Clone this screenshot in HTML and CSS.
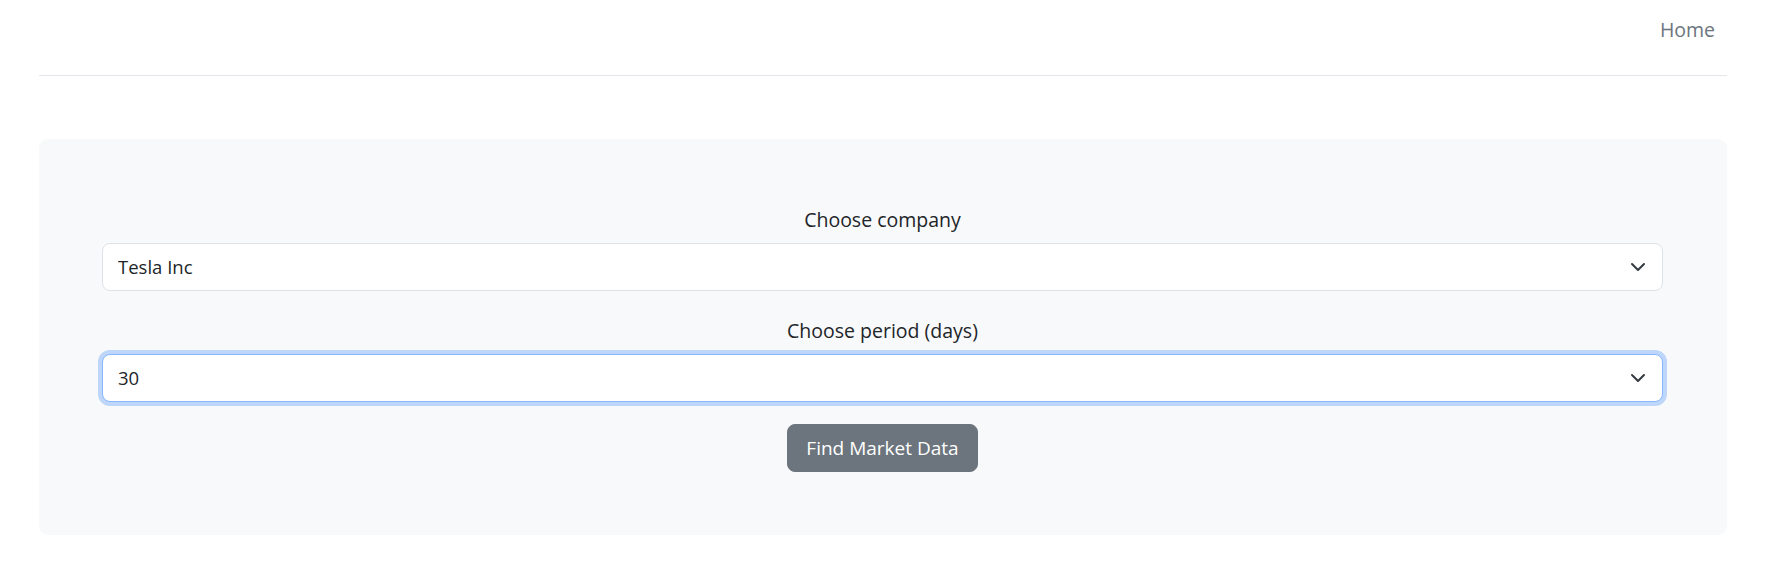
FILE: index.html
```html
<!DOCTYPE html>
<html lang="en">
<head>
<meta charset="utf-8">
<title>Market Data</title>
<link rel="stylesheet" href="styles.css">
</head>
<body>
<div class="page">
  <header class="header">
    <nav class="nav">
      <a class="nav-link" href="#">Home</a>
    </nav>
  </header>
  <main class="card">
    <form class="form">
      <label class="label" for="company">Choose company</label>
      <div class="select-wrap">
        <select id="company" class="select">
          <option>Tesla Inc</option>
        </select>
        <svg class="chevron" width="16" height="16" viewBox="0 0 16 16" aria-hidden="true"><path d="m2 5 6 6 6-6" fill="none" stroke="#343a40" stroke-width="2" stroke-linecap="round" stroke-linejoin="round"/></svg>
      </div>
      <label class="label" for="period">Choose period (days)</label>
      <div class="select-wrap last">
        <select id="period" class="select focused">
          <option>30</option>
        </select>
        <svg class="chevron" width="16" height="16" viewBox="0 0 16 16" aria-hidden="true"><path d="m2 5 6 6 6-6" fill="none" stroke="#343a40" stroke-width="2" stroke-linecap="round" stroke-linejoin="round"/></svg>
      </div>
      <button type="button" class="btn">Find Market Data</button>
    </form>
  </main>
</div>
</body>
</html>
```

FILE: styles.css
```css
* { box-sizing: border-box; }
html, body { margin: 0; padding: 0; background: #fff; }
body {
  font-family: "Open Sans", "Noto Sans", "Liberation Sans", sans-serif;
  color: #212529;
}
.page {
  padding: 0 43px 0 39px;
}
.header {
  height: 76px;
  padding-top: 15px;
  border-bottom: 1px solid #e3e6ea;
}
.nav {
  display: flex;
  justify-content: flex-end;
  padding-right: 12px;
}
.nav-link {
  font-size: 19.5px;
  line-height: 30px;
  color: #6c757d;
  text-decoration: none;
}
.card {
  margin-top: 63px;
  background: #f8f9fa;
  border-radius: 9px;
  padding: 66px 64px 63px 63px;
}
.form {
  display: flex;
  flex-direction: column;
  align-items: center;
}
.label {
  font-size: 19.5px;
  line-height: 30px;
  margin-bottom: 8px;
  color: #212529;
}
.select-wrap {
  position: relative;
  width: 100%;
  margin-bottom: 25px;
}
.select-wrap.last { margin-bottom: 22px; }
.select {
  display: block;
  width: 100%;
  height: 48px;
  padding: 0 48px 0 15px;
  font-family: inherit;
  font-size: 18.5px;
  line-height: 46px;
  color: #212529;
  background: #fff;
  border: 1px solid #dee2e6;
  border-radius: 8px;
  appearance: none;
  -webkit-appearance: none;
  outline: none;
}
.select.focused {
  border-color: #86b7fe;
  box-shadow: 0 0 0 4px rgba(13, 110, 253, 0.25);
}
.chevron {
  position: absolute;
  right: 17px;
  top: 16px;
  pointer-events: none;
}
.btn {
  height: 48px;
  padding: 0 18px;
  font-family: inherit;
  font-size: 19px;
  line-height: 46px;
  color: #fff;
  background: #6c757d;
  border: 1px solid #6c757d;
  border-radius: 8px;
  white-space: nowrap;
  cursor: pointer;
}
```
